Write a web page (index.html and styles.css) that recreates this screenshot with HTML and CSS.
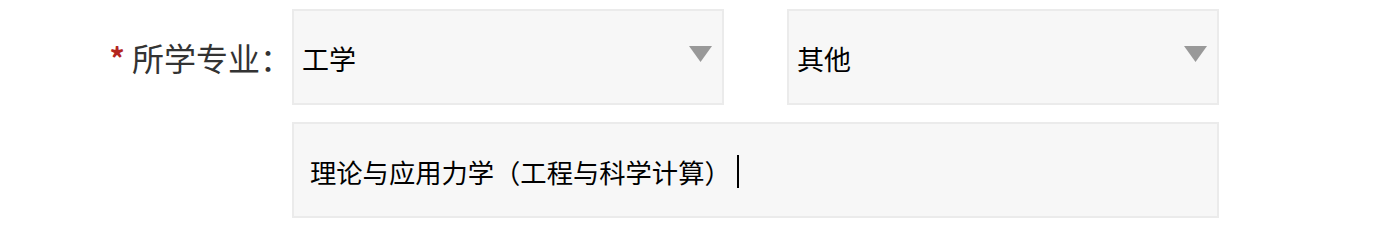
FILE: index.html
```html
<!DOCTYPE html>
<html>
<head>
  <meta charset="UTF-8">
  <title>所学专业</title>
  <link rel="stylesheet" href="styles.css">
</head>
<body>
  <div class="form">
    <div class="form-row">
      <label class="form-label"><span class="required">*</span> 所学专业：</label>
      <div class="form-fields">
        <div class="select">
          <span class="select-text">工学</span>
          <svg class="select-arrow" viewBox="0 0 23 16"><path d="M0 0h23L11.5 16z" fill="#999"/></svg>
        </div>
        <div class="select">
          <span class="select-text">其他</span>
          <svg class="select-arrow" viewBox="0 0 23 16"><path d="M0 0h23L11.5 16z" fill="#999"/></svg>
        </div>
      </div>
    </div>
    <div class="form-row">
      <div class="form-label"></div>
      <div class="form-fields">
        <div class="textbox">
          <span class="textbox-text">理论与应用力学（工程与科学计算）</span>
          <span class="caret"></span>
        </div>
      </div>
    </div>
  </div>
</body>
</html>
```

FILE: styles.css
```css
body {
  margin: 0;
  padding: 0;
  background: #fff;
  font-family: "Noto Sans CJK SC", "Noto Sans", sans-serif;
}

.form {
  padding-top: 9px;
  display: flex;
  flex-direction: column;
  gap: 17px;
}

.form-row {
  display: flex;
  align-items: center;
}

.form-label {
  width: 292px;
  display: flex;
  justify-content: flex-end;
  align-items: center;
  font-size: 32px;
  color: #333;
  white-space: pre;
}

.required {
  color: #b3261e;
  font-weight: bold;
  font-size: 30px;
}

.form-fields {
  display: flex;
  gap: 63px;
}

.select {
  width: 432px;
  height: 96px;
  box-sizing: border-box;
  border: 2px solid #ebebeb;
  background: #f7f7f7;
  display: flex;
  align-items: center;
  justify-content: space-between;
  padding: 2px 10px 0 8px;
}

.select-text {
  font-size: 27px;
  color: #000;
}

.select-arrow {
  width: 23px;
  height: 16px;
  margin-top: -8px;
}

.textbox {
  width: 927px;
  height: 96px;
  box-sizing: border-box;
  border: 2px solid #ebebeb;
  background: #f7f7f7;
  display: flex;
  align-items: center;
  padding: 2px 17px 0 16px;
}

.textbox-text {
  font-size: 26.3px;
  color: #000;
}

.caret {
  display: inline-block;
  width: 2px;
  height: 33px;
  background: #000;
  margin-left: 6px;
}
```
